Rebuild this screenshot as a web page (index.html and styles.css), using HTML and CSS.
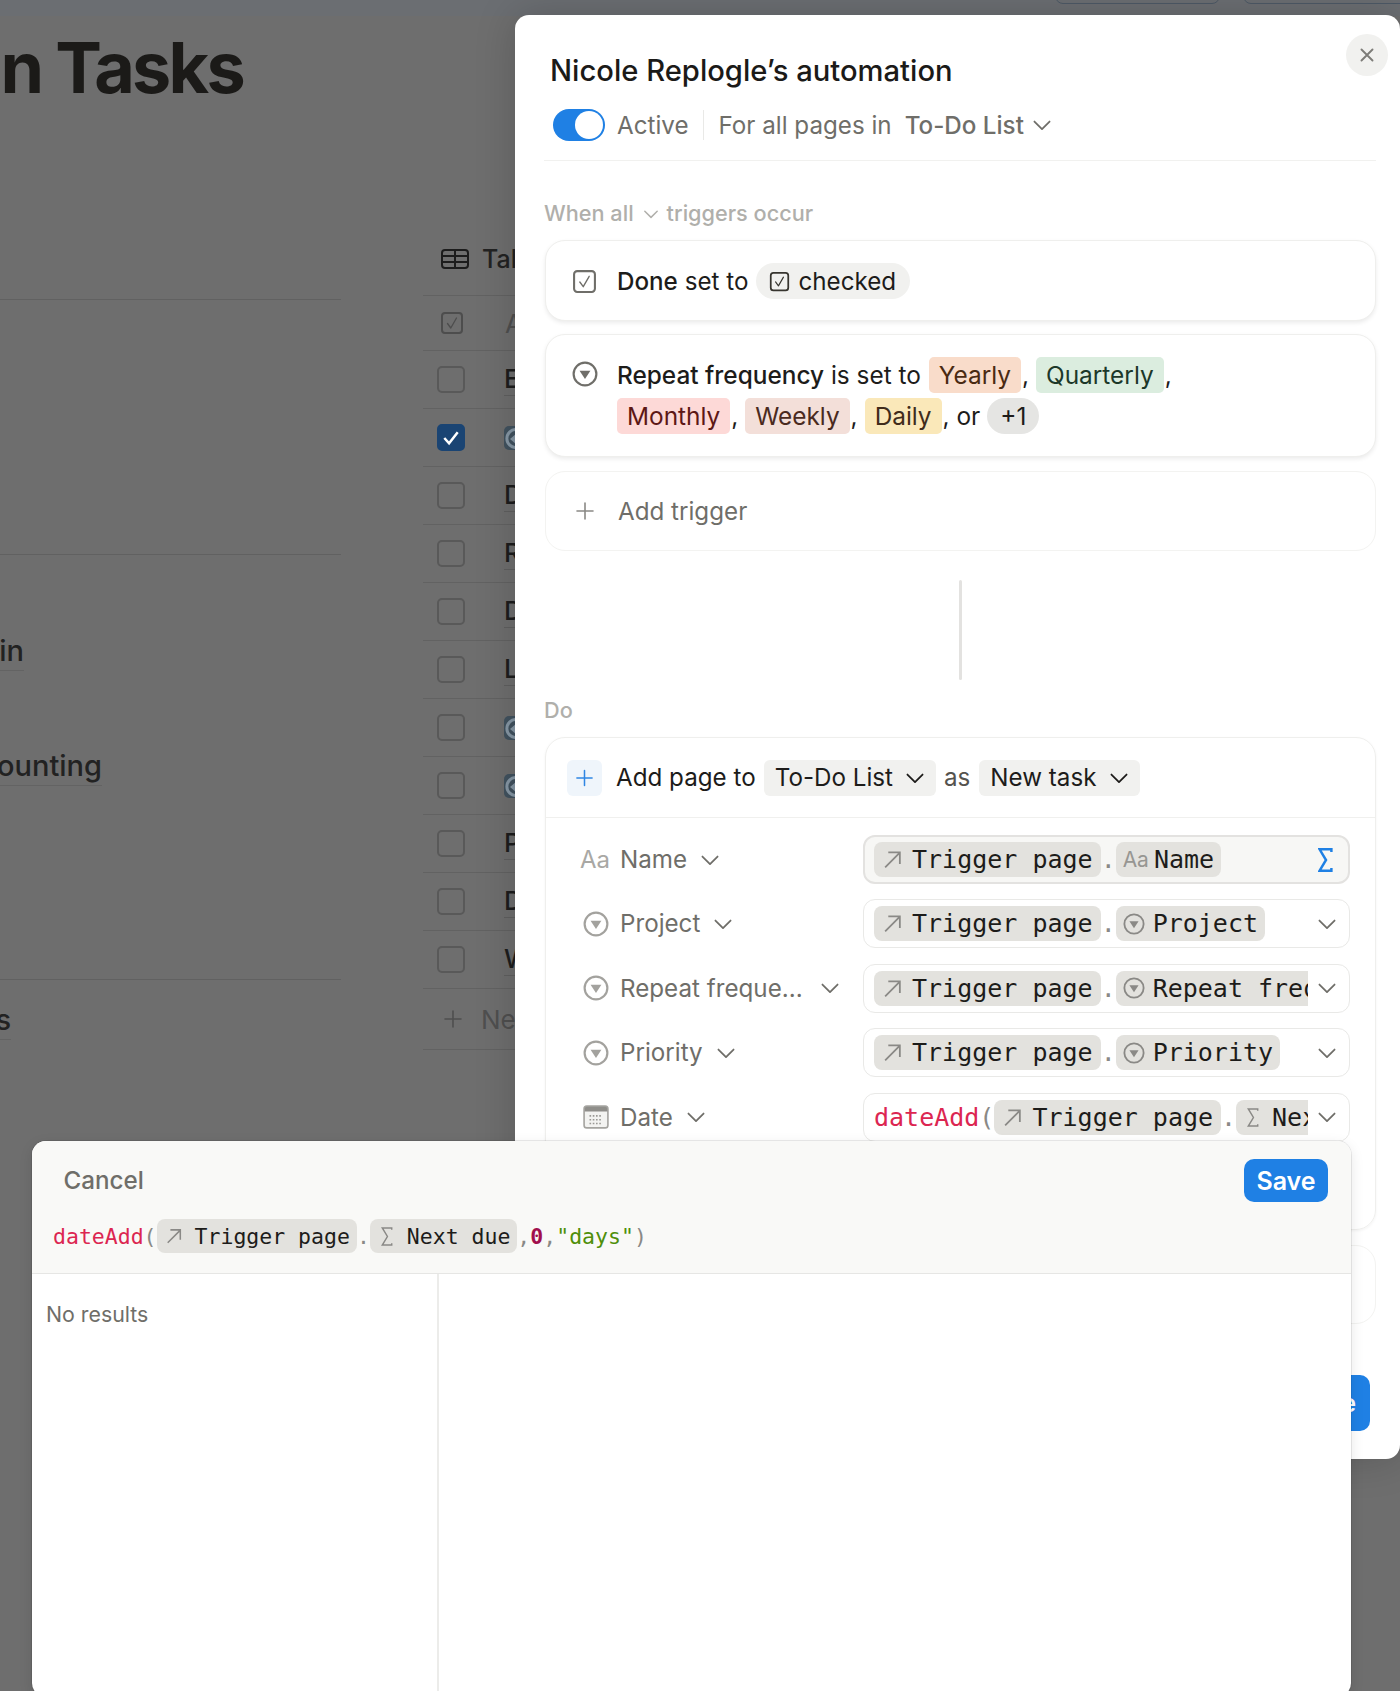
FILE: index.html
```html
<!DOCTYPE html>
<html lang="en">
<head>
<meta charset="utf-8">
<title>Nicole Replogle's automation</title>
<link rel="stylesheet" href="styles.css">
</head>
<body>
<svg class="defs" aria-hidden="true">
  <symbol id="i-chev" viewBox="0 0 16 16"><path d="M2.500 5.500 8 11l5.500-5.500" fill="none" stroke="currentColor" stroke-width="1.300" stroke-linecap="round" stroke-linejoin="round"/></symbol>
  <symbol id="i-select" viewBox="0 0 24 24"><circle cx="12" cy="12" r="10.500" fill="none" stroke="currentColor" stroke-width="2"/><path d="M7 9h10l-5 7.500z" fill="currentColor"/></symbol>
  <symbol id="i-check" viewBox="0 0 24 24"><rect x="2" y="2" width="20" height="20" rx="3" fill="none" stroke="currentColor" stroke-width="2"/><path d="M7.500 12.500 10.800 17 16.500 7" fill="none" stroke="currentColor" stroke-width="1.300" stroke-linecap="round" stroke-linejoin="round"/></symbol>
  <symbol id="i-plus" viewBox="0 0 20 20"><path d="M10 2v16M2 10h16" fill="none" stroke="currentColor" stroke-width="1.600" stroke-linecap="round"/></symbol>
  <symbol id="i-arrow" viewBox="0 0 20 20"><path d="M3 17.500 16.500 4M6 3.200h11v11" fill="none" stroke="currentColor" stroke-width="1.700"/></symbol>
  <symbol id="i-sigma" viewBox="0 0 14 24"><path d="M12.500 4V2H1.500L7.500 12l-6 10h11v-2" fill="none" stroke="currentColor" stroke-width="1.700"/></symbol>
  <symbol id="i-sigma-bold" viewBox="0 0 14 24"><path d="M12.500 4.500V2H1.500L7.500 12l-6 10h11v-2.500" fill="none" stroke="currentColor" stroke-width="2.300"/></symbol>
  <symbol id="i-cal" viewBox="0 0 24 24"><rect x="1" y="2" width="22" height="20" rx="2.500" fill="#f3f3f1" stroke="#a5a4a0" stroke-width="1.500"/><path d="M1.500 4.500a2 2 0 0 1 2-2h17a2 2 0 0 1 2 2V7h-21z" fill="#8f8e8a"/><path d="M6 11h12M6 14.500h12M6 18h12" stroke="#9a9995" stroke-width="1.500" stroke-dasharray="1.500 1.500"/></symbol>
  <symbol id="i-table" viewBox="0 0 28 20"><rect x="1" y="1" width="26" height="18" rx="3" fill="none" stroke="currentColor" stroke-width="2"/><path d="M1 7h26M1 13h26M14 1v18" fill="none" stroke="currentColor" stroke-width="2"/></symbol>
  <symbol id="i-emoji" viewBox="0 0 24 24"><rect width="24" height="24" rx="5" fill="#41525f"/><path d="M19 7a9 9 0 1 0 0 11" fill="none" stroke="#8798a6" stroke-width="3"/><path d="M6 13l6-5v10z" fill="#8798a6"/></symbol>
</svg>

<div class="topbar">
  <span class="top-pill"></span>
  <span class="top-pill wide"></span>
</div>

<div class="backdrop">
  <div class="side">
    <h1 class="page-title">n Tasks</h1>
    <div class="side-rule first"></div>
    <div class="side-rule second"></div>
    <div class="side-item in"><span>in</span></div>
    <div class="side-item acc"><span>ounting</span></div>
    <div class="side-rule third"></div>
    <div class="side-item s"><span>s</span></div>
  </div>
  <div class="table">
    <div class="tab"><svg class="tab-icon"><use href="#i-table"/></svg><span>Tal</span></div>
    <div class="t-head"><svg class="head-check"><use href="#i-check"/></svg><span class="head-aa">A</span></div>
    <div class="t-row"><span class="box"></span><span class="cell">E</span></div>
    <div class="t-row"><span class="box on"><svg viewBox="0 0 24 24"><path d="M5 12.500 10 18 19 6.500" fill="none" stroke="#fff" stroke-width="2.600"/></svg></span><svg class="emoji"><use href="#i-emoji"/></svg></div>
    <div class="t-row"><span class="box"></span><span class="cell">D</span></div>
    <div class="t-row"><span class="box"></span><span class="cell">R</span></div>
    <div class="t-row"><span class="box"></span><span class="cell">D</span></div>
    <div class="t-row"><span class="box"></span><span class="cell">L</span></div>
    <div class="t-row"><span class="box"></span><svg class="emoji"><use href="#i-emoji"/></svg></div>
    <div class="t-row"><span class="box"></span><svg class="emoji"><use href="#i-emoji"/></svg></div>
    <div class="t-row"><span class="box"></span><span class="cell">P</span></div>
    <div class="t-row"><span class="box"></span><span class="cell">D</span></div>
    <div class="t-row"><span class="box"></span><span class="cell">W</span></div>
    <div class="t-new"><svg class="new-plus"><use href="#i-plus"/></svg><span>New</span></div>
  </div>
</div>

<section class="modal">
  <button class="close" aria-label="Close"><svg viewBox="0 0 16 16"><path d="M2.500 2.500l11 11M13.500 2.500l-11 11" fill="none" stroke="currentColor" stroke-width="1.900" stroke-linecap="round"/></svg></button>
  <h2 class="m-title">Nicole Replogle’s automation</h2>
  <div class="m-status">
    <span class="toggle"><span class="knob"></span></span>
    <span class="status-text">Active</span>
    <span class="status-sep"></span>
    <span class="status-text">For all pages in</span>
    <span class="status-db">To-Do List</span>
    <svg class="chev"><use href="#i-chev"/></svg>
  </div>

  <div class="sec-label when"><span>When all</span><svg class="chev sm"><use href="#i-chev"/></svg><span>triggers occur</span></div>

  <div class="card one">
    <svg class="c-icon"><use href="#i-check"/></svg>
    <span class="one-text"><strong>Done</strong> set to</span>
    <span class="pill"><svg class="pill-icon"><use href="#i-check"/></svg>checked</span>
  </div>

  <div class="card two">
    <svg class="c-icon"><use href="#i-select"/></svg>
    <div class="two-lines">
      <div class="t-line"><span class="lead"><strong>Repeat frequency</strong> is set to</span><span class="tag yearly">Yearly</span><span class="comma">,</span><span class="tag quarterly">Quarterly</span><span class="comma">,</span></div>
      <div class="t-line"><span class="tag monthly">Monthly</span><span class="comma">,</span><span class="tag weekly">Weekly</span><span class="comma">,</span><span class="tag daily">Daily</span><span class="comma">, or</span><span class="more">+1</span></div>
    </div>
  </div>

  <div class="card add"><svg class="add-plus"><use href="#i-plus"/></svg>Add trigger</div>

  <div class="connector"></div>
  <div class="sec-label do">Do</div>

  <div class="do-card">
    <div class="do-head">
      <span class="plus-box"><svg><use href="#i-plus"/></svg></span>
      <span class="do-text">Add page to</span>
      <span class="select">To-Do List<svg class="chev"><use href="#i-chev"/></svg></span>
      <span class="do-as">as</span>
      <span class="select">New task<svg class="chev"><use href="#i-chev"/></svg></span>
    </div>
    <div class="props">
      <div class="prop">
        <div class="p-label"><span class="aa">Aa</span><span>Name</span><svg class="chev"><use href="#i-chev"/></svg></div>
        <div class="fx focus">
          <div class="fx-in"><span class="ref"><svg class="r-icon"><use href="#i-arrow"/></svg>Trigger page</span><span class="dot">.</span><span class="ref tight"><span class="aa small">Aa</span>Name</span></div>
          <svg class="fx-sigma"><use href="#i-sigma-bold"/></svg>
        </div>
      </div>
      <div class="prop">
        <div class="p-label"><svg class="p-icon"><use href="#i-select"/></svg><span>Project</span><svg class="chev"><use href="#i-chev"/></svg></div>
        <div class="fx">
          <div class="fx-in"><span class="ref"><svg class="r-icon"><use href="#i-arrow"/></svg>Trigger page</span><span class="dot">.</span><span class="ref tight"><svg class="r-sel"><use href="#i-select"/></svg>Project</span></div>
          <svg class="chev fx-chev"><use href="#i-chev"/></svg>
        </div>
      </div>
      <div class="prop">
        <div class="p-label"><svg class="p-icon"><use href="#i-select"/></svg><span class="long">Repeat freque...</span><svg class="chev"><use href="#i-chev"/></svg></div>
        <div class="fx">
          <div class="fx-in"><span class="ref"><svg class="r-icon"><use href="#i-arrow"/></svg>Trigger page</span><span class="dot">.</span><span class="ref tight"><svg class="r-sel"><use href="#i-select"/></svg>Repeat frequency</span></div>
          <svg class="chev fx-chev"><use href="#i-chev"/></svg>
        </div>
      </div>
      <div class="prop">
        <div class="p-label"><svg class="p-icon"><use href="#i-select"/></svg><span>Priority</span><svg class="chev"><use href="#i-chev"/></svg></div>
        <div class="fx">
          <div class="fx-in"><span class="ref"><svg class="r-icon"><use href="#i-arrow"/></svg>Trigger page</span><span class="dot">.</span><span class="ref tight"><svg class="r-sel"><use href="#i-select"/></svg>Priority</span></div>
          <svg class="chev fx-chev"><use href="#i-chev"/></svg>
        </div>
      </div>
      <div class="prop">
        <div class="p-label"><svg class="p-icon"><use href="#i-cal"/></svg><span>Date</span><svg class="chev"><use href="#i-chev"/></svg></div>
        <div class="fx">
          <div class="fx-in"><span class="fn">dateAdd</span><span class="paren">(</span><span class="ref"><svg class="r-icon"><use href="#i-arrow"/></svg>Trigger page</span><span class="dot">.</span><span class="ref sig"><svg class="r-sig"><use href="#i-sigma"/></svg>Next due</span></div>
          <svg class="chev fx-chev"><use href="#i-chev"/></svg>
        </div>
      </div>
    </div>
  </div>

  <div class="card ghost"></div>
  <div class="m-foot"><button class="primary done">Done</button></div>
</section>

<section class="editor">
  <div class="ed-head">
    <div class="ed-top">
      <span class="cancel">Cancel</span>
      <button class="primary save">Save</button>
    </div>
    <div class="ed-formula"><span class="fn">dateAdd</span><span class="paren">(</span><span class="ref"><svg class="r-icon"><use href="#i-arrow"/></svg>Trigger page</span><span class="dot">.</span><span class="ref sig"><svg class="r-sig"><use href="#i-sigma"/></svg>Next due</span><span class="paren">,</span><span class="num">0</span><span class="paren">,</span><span class="str">"days"</span><span class="paren">)</span></div>
  </div>
  <div class="ed-body">
    <div class="ed-list">No results</div>
    <div class="ed-detail"></div>
  </div>
</section>
</body>
</html>
```
FILE: styles.css
```css
* { box-sizing: border-box; }
html, body { margin: 0; height: 1691px; }
body {
  position: relative;
  width: 1400px;
  overflow: hidden;
  background: #6e6e6e;
  font-family: Inter, "Liberation Sans", sans-serif;
  font-size: 24.200px;
  color: #1d1c1a;
}
.defs { position: absolute; width: 0; height: 0; }
button { font: inherit; border: 0; }

/* dimmed page behind the dialog */
.topbar {
  height: 16px;
  background: #6b6e72;
  overflow: hidden;
  display: flex;
  justify-content: flex-end;
  gap: 23px;
}
.top-pill {
  width: 165px;
  height: 34px;
  margin-top: -30px;
  border: 1px solid #4d5966;
  border-radius: 8px;
  flex: none;
}
.top-pill.wide { width: 190px; margin-right: -33px; }

.backdrop { display: flex; }
.side { width: 341px; flex: none; }
.page-title {
  margin: 12px 0 0;
  width: 243px;
  height: 80px;
  display: flex;
  justify-content: flex-end;
  font-size: 70px;
  line-height: 80px;
  font-weight: 700;
  letter-spacing: -2.700px;
  white-space: nowrap;
  color: #1b1a18;
}
.side-rule { height: 1px; background: #616161; }
.side-rule.first { margin-top: 191px; }
.side-rule.second { margin-top: 254px; }
.side-rule.third { margin-top: 193px; }
.side-item { display: flex; justify-content: flex-end; font-size: 29px; font-weight: 500; line-height: 38px; color: #222; }
.side-item span { border-bottom: 1px solid #636363; white-space: nowrap; }
.side-item.in { width: 24px; margin-top: 77px; }
.side-item.acc { width: 102px; margin-top: 76px; }
.side-item.s { width: 11px; margin-top: 21px; }

.table { width: 92px; margin-left: 82px; flex: none; overflow: hidden; }
.tab { height: 279px; padding: 0 0 0 18px; display: flex; align-items: flex-end; gap: 13px; font-size: 25px; font-weight: 500; color: #222; white-space: nowrap; }
.tab span { padding-bottom: 21px; }
.tab-icon { width: 28px; height: 20px; color: #1c1c1c; margin-bottom: 26px; flex: none; }
.t-head { height: 56px; display: flex; align-items: center; padding-left: 17px; border-top: 1px solid #626262; border-bottom: 1px solid #626262; }
.head-check { width: 24px; height: 24px; color: #4d4d4d; flex: none; }
.head-aa { margin-left: 41px; color: #4f4f4f; font-size: 26px; }
.t-row { height: 58px; display: flex; align-items: center; padding-left: 14px; border-bottom: 1px solid #626262; }
.box { width: 28px; height: 27px; border: 2px solid #595959; border-radius: 5px; flex: none; display: flex; }
.box.on { background: #1a4473; border-color: #1a4473; }
.box svg { width: 100%; height: 100%; }
.cell { margin-left: 39px; font-size: 26px; font-weight: 500; border-bottom: 1px solid #5f5f5f; line-height: 32px; color: #1d1d1d; }
.emoji { margin-left: 39px; width: 24px; height: 24px; flex: none; }
.t-new { height: 61px; display: flex; align-items: center; padding-left: 20px; gap: 18px; color: #4f4f4f; border-bottom: 1px solid #626262; white-space: nowrap; font-size: 26px; }
.new-plus { width: 20px; height: 20px; flex: none; }

/* automation dialog */
.modal {
  position: absolute;
  left: 515px;
  top: 15px;
  width: 885px;
  height: 1444px;
  padding: 36px 24px 0 29px;
  background: #fff;
  border-radius: 14px;
  box-shadow: 0 0 40px rgba(0,0,0,.18);
}
.close {
  position: absolute;
  right: 12px;
  top: 19px;
  width: 42px;
  height: 42px;
  padding: 13px;
  border-radius: 50%;
  background: #f1f1ef;
  color: #7d7c78;
  display: flex;
}
.close svg { width: 100%; height: 100%; }
.m-title { margin: 0 0 0 6px; font-size: 29.200px; line-height: 40px; font-weight: 500; color: #1b1a18; }
.m-status { margin-top: 18px; padding: 0 0 19px 9px; border-bottom: 1px solid #f1f1ef; display: flex; align-items: center; color: #6f6e69; white-space: nowrap; box-sizing: content-box; height: 32px; }
.toggle { width: 52px; height: 32px; border-radius: 16px; background: #1f80e4; padding: 2px 2px 2px 22px; flex: none; }
.knob { display: block; width: 28px; height: 28px; border-radius: 50%; background: #fff; }
.status-text { margin-left: 12px; }
.status-sep { width: 1px; height: 30px; background: #e9e9e7; margin: 0 3px 0 14px; }
.status-db { margin-left: 13px; font-weight: 500; }
.chev { width: 22px; height: 22px; flex: none; }
.chev.sm { width: 18px; height: 18px; }
.m-status .chev { margin-left: 7px; }

.sec-label { font-size: 21.700px; line-height: 26px; color: #b0afab; font-weight: 500; white-space: nowrap; }
.when { margin-top: 39px; display: flex; align-items: center; }
.when .chev { margin: 2px 7px 0 8px; }
.do { margin-top: 17px; }

.card {
  margin-left: 1px;
  width: 831px;
  border: 1px solid #efefed;
  border-radius: 20px;
  background: #fff;
  box-shadow: 0 2px 4px rgba(0,0,0,.08);
}
.one { margin-top: 14px; height: 81px; display: flex; align-items: center; padding: 1px 0 0 26px; white-space: pre; }
.c-icon { width: 25px; height: 25px; color: #6f6e69; flex: none; margin-right: 20px; }
strong { font-weight: 500; }
.pill { margin-left: 8px; height: 36px; padding: 0 14px 0 13px; border-radius: 18px; background: #f1f1ef; display: inline-flex; align-items: center; }
.pill-icon { width: 21px; height: 21px; margin-right: 8px; color: #37352f; }

.two { margin-top: 13px; height: 123px; padding: 22px 0 0 26px; display: flex; align-items: flex-start; }
.two .c-icon { width: 26px; height: 26px; margin: 4px 19px 0 0; }
.two-lines { display: flex; flex-direction: column; gap: 5px; font-size: 24.400px; }
.t-line { height: 36px; display: flex; align-items: center; white-space: pre; }
.lead { margin-right: 8px; }
.tag { height: 36px; padding: 0 10px; border-radius: 5px; display: inline-flex; align-items: center; }
.comma { margin-left: 1px; margin-right: 7px; }
.yearly { background: #f9dcca; color: #4a2a12; }
.quarterly { background: #dbeddf; color: #1c3829; }
.monthly { background: #fdd9d7; color: #5d1715; }
.weekly { background: #f3dfd9; color: #4a2a20; }
.daily { background: #fae8b9; color: #402c1b; }
.more { height: 36px; padding: 0 13px; border-radius: 18px; background: #e5e5e3; display: inline-flex; align-items: center; }

.add { margin-top: 14px; height: 80px; display: flex; align-items: center; padding-left: 29px; color: #6f6e69; box-shadow: none; border-color: #f3f3f1; }
.add-plus { width: 20px; height: 20px; margin-right: 23px; color: #8a8985; flex: none; }

.connector { width: 3px; height: 100px; margin: 29px 0 0 415px; background: #e3e2e0; border-radius: 2px; }

.do-card {
  margin: 14px 0 0 1px;
  width: 831px;
  height: 493px;
  border: 1px solid #efefed;
  border-radius: 20px;
  box-shadow: 0 1px 3px rgba(0,0,0,.05);
}
.do-head { height: 80px; border-bottom: 1px solid #f0f0ee; padding-left: 21px; display: flex; align-items: center; white-space: nowrap; }
.plus-box { width: 35px; height: 36px; border-radius: 6px; background: #eff5fb; padding: 8px; color: #2f86e3; display: flex; flex: none; }
.plus-box svg { width: 100%; height: 100%; }
.do-text { margin-left: 14px; }
.select { margin-left: 8px; height: 36px; padding: 0 10px 0 11px; border-radius: 6px; background: #f1f1ef; display: inline-flex; align-items: center; gap: 11px; }
.do-as { margin-left: 8px; color: #55534e; }
.do-as + .select { margin-left: 9px; }

.props { padding: 17px 25px 0 0; display: flex; flex-direction: column; gap: 15.400px; }
.prop { display: flex; align-items: center; justify-content: space-between; }
.p-label { width: 300px; padding-left: 37px; display: flex; align-items: center; color: #6f6e69; white-space: nowrap; }
.p-label .chev { margin-left: 12px; color: #6f6e69; }
.p-label .long + .chev { margin-left: 16px; }
.p-icon { width: 26px; height: 26px; margin-right: 11px; color: #a3a29e; flex: none; }
.aa { width: 32px; margin: 0 8px 0 -3px; color: #a9a8a4; font-size: 24px; flex: none; }
.aa.small { width: auto; margin: 0 5px 0 0; color: #979692; font-size: 21px; font-family: Inter, sans-serif; }

.fx {
  width: 487px;
  height: 49px;
  padding: 0 0 0 10px;
  border: 1px solid #e9e9e7;
  border-radius: 12px;
  display: flex;
  align-items: center;
  background: #fff;
  font-family: "DejaVu Sans Mono", "Liberation Mono", monospace;
  font-size: 25px;
}
.fx.focus { background: #f7f7f5; border: 2px solid #e3e2e0; padding-left: 9px; }
.fx-in { width: 434px; flex: none; display: flex; align-items: center; overflow: hidden; white-space: nowrap; }
.fx-sigma { width: 15px; height: 26px; margin-left: 10px; color: #1f80e4; flex: none; }
.fx-chev { margin-left: 8px; color: #6f6e69; }
.ref { flex: none; height: 35px; padding: 0 8px; border-radius: 8px; background: #e3e2de; color: #1d1c1a; display: inline-flex; align-items: center; }
.ref.tight { padding-left: 7px; padding-right: 7px; }
.ref.sig { padding-left: 11px; }
.r-icon { width: 21px; height: 21px; margin-right: 9px; color: #8a8986; flex: none; }
.r-sel { width: 22px; height: 22px; margin-right: 8px; color: #8a8986; flex: none; }
.r-sig { width: 12px; height: 21px; margin-right: 13px; color: #8a8986; flex: none; }
.dot { width: 15px; color: #8a8986; text-align: center; flex: none; }
.fn { color: #dc2651; }
.paren { color: #8a8986; }
.num { color: #a10f4d; font-weight: 700; }
.str { color: #4f8f0a; }

.ghost { margin-top: 15px; height: 79px; box-shadow: none; border-color: #f3f3f1; }
.m-foot { margin-top: 51px; display: flex; justify-content: flex-end; padding-right: 6px; }
.primary { background: #1f80e4; color: #fff; font-weight: 600; }
.done { width: 110px; height: 56px; padding: 0 14px 0 0; border-radius: 10px; text-align: right; }

/* formula editor */
.editor {
  position: absolute;
  left: 31.500px;
  top: 1141px;
  width: 1319.500px;
  height: 556px;
  background: #fff;
  border-radius: 14px;
  overflow: hidden;
  box-shadow: 0 0 0 1px rgba(0,0,0,.08), 0 4px 14px rgba(0,0,0,.10);
}
.ed-head { height: 133px; background: #f9f9f7; border-bottom: 1px solid #e6e6e4; }
.ed-top { height: 78px; padding: 18px 23px 0 32px; display: flex; align-items: flex-start; justify-content: space-between; }
.cancel { color: #6f6e69; font-weight: 500; line-height: 43px; }
.save { width: 84px; height: 43px; padding: 0; border-radius: 10px; font-size: 25px; }
.ed-formula { padding-left: 21.500px; display: flex; align-items: center; font-family: "DejaVu Sans Mono", "Liberation Mono", monospace; font-size: 21.500px; white-space: pre; }
.ed-formula .ref { height: 34px; padding-right: 7px; }
.ed-formula .r-icon { width: 18px; height: 18px; margin-right: 12px; }
.ed-formula .r-sig { margin-right: 14px; }
.ed-formula .dot { width: 12.900px; }
.ed-body { display: flex; height: 423px; }
.ed-list { width: 407.500px; padding: 22px 0 0 14.500px; font-size: 21.330px; line-height: 36px; color: #6f6e69; border-right: 2px solid #ececea; flex: none; }
.ed-detail { flex: 1; }
```
